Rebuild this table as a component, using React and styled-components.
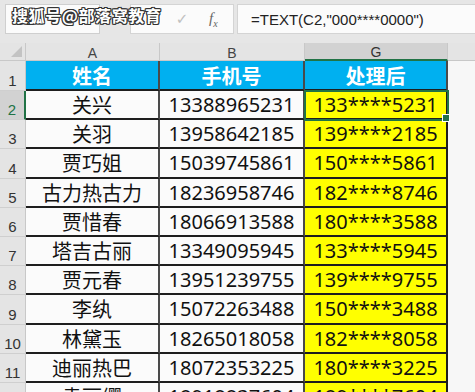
import React from "react";
import styled, { createGlobalStyle, css } from "styled-components";

const Global = createGlobalStyle`
  html, body { margin: 0; padding: 0; background: #f7f7f7; overflow: hidden; }
  body { font-family: "Noto Sans", "Noto Sans CJK SC", sans-serif; }
`;

const Page = styled.div`
  position: relative;
  width: 475px;
  height: 392px;
  overflow: hidden;
  background: #f7f7f7;
`;

const Toolbar = styled.div`
  height: 43px;
  background: #e6e6e6;
  display: flex;
  align-items: flex-start;
  padding-top: 4px;
  box-sizing: border-box;
`;

const NameBox = styled.div`
  margin-left: 5px;
  width: 95px;
  height: 30px;
  box-sizing: border-box;
  background: #fbfbfb;
  border: 1px solid #cfcfcf;
  font: 15px "Liberation Sans", sans-serif;
  color: #333;
  display: flex;
  align-items: center;
  padding-left: 8px;
`;

const Dots = styled.div`
  width: 30px;
  height: 30px;
  display: flex;
  align-items: center;
  justify-content: center;
  color: #9a9a9a;
  font: 12px "Liberation Sans", sans-serif;
`;

const FuncBox = styled.div`
  width: 104px;
  height: 30px;
  box-sizing: border-box;
  background: #fbfbfb;
  border: 1px solid #d4d4d4;
  display: flex;
  align-items: center;
  justify-content: space-around;
  padding: 0 4px;
`;

const FuncIcon = styled.span`
  color: ${(p) => p.color || "#c0c0c0"};
  font: ${(p) => (p.italic ? "italic 15px 'Liberation Serif', serif" : "15px 'DejaVu Sans', sans-serif")};
  width: 24px;
  text-align: center;
`;

const Formula = styled.div`
  margin-left: 3px;
  flex: 1;
  height: 30px;
  box-sizing: border-box;
  background: #fbfbfb;
  border: 1px solid #d4d4d4;
  border-right: none;
  display: flex;
  align-items: center;
  padding-left: 13px;
  font: 15px "Liberation Sans", sans-serif;
  color: #222;
`;

const Watermark = styled.div`
  position: absolute;
  left: 12px;
  top: 3px;
  font: bold 16px "Noto Sans CJK SC", sans-serif;
  color: #fff;
  letter-spacing: 0.6px;
  text-shadow: -1px -1px 0 #333, 1px -1px 0 #333, -1px 1px 0 #333, 1px 1px 0 #333,
    0 1px 0 #333, 0 -1px 0 #333, 1px 0 0 #333, -1px 0 0 #333;
`;

const Grid = styled.div`
  display: grid;
  grid-template-columns: 26px 134px 145px 143px 1fr;
  grid-template-rows: 18px 30px repeat(11, 29.2px);
`;

const Corner = styled.div`
  background: #e4e4e4;
  border-right: 1px solid #c8c8c8;
  border-bottom: 1px solid #c8c8c8;
  box-sizing: border-box;
  position: relative;
  &::after {
    content: "";
    position: absolute;
    right: 3px;
    bottom: 3px;
    border-left: 11px solid transparent;
    border-bottom: 11px solid #c3c3c3;
  }
`;

const ColHead = styled.div`
  box-sizing: border-box;
  background: ${(p) => (p.active ? "#d2d2d2" : "#e4e4e4")};
  border-right: 1px solid #c8c8c8;
  border-bottom: ${(p) => (p.active ? "2px solid #217346" : "1px solid #c8c8c8")};
  display: flex;
  align-items: center;
  justify-content: center;
  font: 14px "Liberation Sans", sans-serif;
  color: ${(p) => (p.active ? "#333" : "#444")};
  padding-top: 2px;
`;

const RowHead = styled.div`
  box-sizing: border-box;
  background: ${(p) => (p.active ? "#d2d2d2" : "#e4e4e4")};
  border-right: ${(p) => (p.active ? "2px solid #217346" : "1px solid #c8c8c8")};
  border-bottom: 1px solid #cfcfcf;
  display: flex;
  align-items: flex-end;
  justify-content: center;
  font: 15px "Liberation Sans", sans-serif;
  color: ${(p) => (p.active ? "#217346" : "#333")};
  padding-bottom: 1px;
`;

const Cell = styled.div`
  box-sizing: border-box;
  position: relative;
  display: flex;
  align-items: center;
  justify-content: center;
  border-right: 2px solid #4a4a4a;
  border-bottom: 2px solid #1e1e1e;
  font-size: 20px;
  font-family: "Noto Sans", "Noto Sans CJK SC", sans-serif;
  color: #111;
  background: #fbfbfb;
  white-space: nowrap;
  ${(p) =>
    p.head &&
    css`
      background: #00b0f0;
      color: #fff;
      font-weight: bold;
      border-bottom-color: #1e1e1e;
    `}
  ${(p) =>
    p.yellow &&
    css`
      background: #ffff00;
      border-right-color: #1e1e1e;
    `}
  ${(p) =>
    p.selected &&
    css`
      outline: 2px solid #217346;
      outline-offset: -1px;
      z-index: 1;
      &::after {
        content: "";
        position: absolute;
        right: -4px;
        bottom: -4px;
        width: 6px;
        height: 6px;
        background: #217346;
        border: 1px solid #fff;
      }
    `}
`;

const Blank = styled.div`
  background: ${(p) => (p.head ? "#e4e4e4" : "#f7f7f7")};
  border-bottom: ${(p) => (p.head ? "1px solid #c8c8c8" : "none")};
  box-sizing: border-box;
`;

const rows = [
  ["关兴", "13388965231"],
  ["关羽", "13958642185"],
  ["贾巧姐", "15039745861"],
  ["古力热古力", "18236958746"],
  ["贾惜春", "18066913588"],
  ["塔吉古丽", "13349095945"],
  ["贾元春", "13951239755"],
  ["李纨", "15072263488"],
  ["林黛玉", "18265018058"],
  ["迪丽热巴", "18072353225"],
  ["袁丽缨", "18918837604"],
];

const mask = (n) => n.slice(0, 3) + "****" + n.slice(7);

export default function App() {
  return (
    <Page>
      <Global />
      <Toolbar>
        <NameBox>G2</NameBox>
        <Dots>⋮</Dots>
        <FuncBox>
          <FuncIcon>✕</FuncIcon>
          <FuncIcon>✓</FuncIcon>
          <FuncIcon italic color="#666">
            f<sub style={{ fontSize: 10 }}>x</sub>
          </FuncIcon>
        </FuncBox>
        <Formula>=TEXT(C2,"000****0000")</Formula>
      </Toolbar>
      <Grid>
        <Corner />
        <ColHead>A</ColHead>
        <ColHead>B</ColHead>
        <ColHead active>G</ColHead>
        <Blank head />

        <RowHead>1</RowHead>
        <Cell head>姓名</Cell>
        <Cell head>手机号</Cell>
        <Cell head>处理后</Cell>
        <Blank />

        {rows.map(([name, phone], i) => (
          <React.Fragment key={i}>
            <RowHead active={i === 0}>{i + 2}</RowHead>
            <Cell>{name}</Cell>
            <Cell>{phone}</Cell>
            <Cell yellow selected={i === 0}>
              {mask(phone)}
            </Cell>
            <Blank />
          </React.Fragment>
        ))}
      </Grid>
      <Watermark>搜狐号@部落窝教育</Watermark>
    </Page>
  );
}
